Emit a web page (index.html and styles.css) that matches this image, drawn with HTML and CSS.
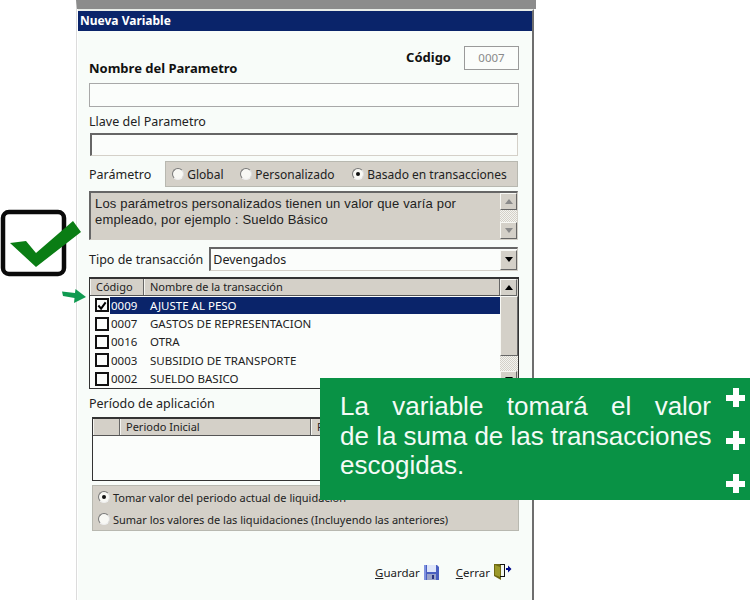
FILE: index.html
```html
<!DOCTYPE html>
<html lang="es">
<head>
<meta charset="utf-8">
<title>Nueva Variable</title>
<link rel="stylesheet" href="styles.css">
</head>
<body>
<div class="desk">
  <div class="backstrip"></div>
  <div class="window">
    <div class="titlebar">Nueva Variable</div>
    <div class="content">
      <div class="top-row">
        <label class="bold name-label">Nombre del Parametro</label>
        <div class="code-group">
          <span class="bold">Código</span>
          <span class="code-box">0007</span>
        </div>
      </div>
      <div class="field flat"></div>
      <div class="label key-label">Llave del Parametro</div>
      <div class="field inset"></div>
      <div class="param-row">
        <span class="label">Parámetro</span>
        <div class="radio-panel">
          <span class="radio-item"><i class="radio"></i>Global</span>
          <span class="radio-item"><i class="radio"></i>Personalizado</span>
          <span class="radio-item"><i class="radio on"></i>Basado en transacciones</span>
        </div>
      </div>
      <div class="desc">
        <p>Los parámetros personalizados tienen un valor que varía por empleado, por ejemplo : Sueldo Básico</p>
        <div class="scroll">
          <span class="sbtn"><svg width="8" height="5" viewBox="0 0 8 5"><path d="M4 0 8 5H0z" fill="#8a8a8a"/></svg></span>
          <span class="strack"></span>
          <span class="sbtn"><svg width="8" height="5" viewBox="0 0 8 5"><path d="M0 0H8L4 5z" fill="#8a8a8a"/></svg></span>
        </div>
      </div>
      <div class="type-row">
        <span class="label">Tipo de transacción</span>
        <div class="select">
          <span class="select-value">Devengados</span>
          <span class="sbtn big"><svg width="8" height="5" viewBox="0 0 8 5"><path d="M0 0H8L4 5z" fill="#000"/></svg></span>
        </div>
      </div>
      <div class="grid tx-grid">
        <div class="grid-main">
          <div class="grid-head">
            <span class="th th-code">Código</span>
            <span class="th th-name">Nombre de la transacción</span>
          </div>
          <div class="row selected"><i class="check on"><svg width="11" height="11" viewBox="0 0 11 11"><path d="M1.5 5.5 4.5 9 9.5 2" fill="none" stroke="#000" stroke-width="2.2"/></svg></i><span class="cell-code">0009</span><span class="cell-name">AJUSTE AL PESO</span></div>
          <div class="row"><i class="check"></i><span class="cell-code">0007</span><span class="cell-name">GASTOS DE REPRESENTACION</span></div>
          <div class="row"><i class="check"></i><span class="cell-code">0016</span><span class="cell-name">OTRA</span></div>
          <div class="row"><i class="check"></i><span class="cell-code">0003</span><span class="cell-name">SUBSIDIO DE TRANSPORTE</span></div>
          <div class="row"><i class="check"></i><span class="cell-code">0002</span><span class="cell-name">SUELDO BASICO</span></div>
        </div>
        <div class="scroll grid-scroll">
          <span class="sbtn"><svg width="8" height="5" viewBox="0 0 8 5"><path d="M4 0 8 5H0z" fill="#000"/></svg></span>
          <span class="thumb"></span>
          <span class="strack"></span>
          <span class="sbtn"><svg width="8" height="5" viewBox="0 0 8 5"><path d="M0 0H8L4 5z" fill="#000"/></svg></span>
        </div>
      </div>
      <div class="label period-label">Período de aplicación</div>
      <div class="indent">
        <div class="period-grid">
          <div class="grid-head period-head">
            <span class="th th-blank"></span>
            <span class="th th-start">Periodo Inicial</span>
            <span class="th th-end">P</span>
          </div>
        </div>
        <div class="option-panel">
          <span class="radio-item"><i class="radio on"></i>Tomar valor del periodo actual de liquidación</span>
          <span class="radio-item"><i class="radio"></i>Sumar los valores de las liquidaciones (Incluyendo las anteriores)</span>
        </div>
      </div>
      <div class="actions">
        <span class="action"><span><u>G</u>uardar</span>
          <svg width="17" height="17" viewBox="0 0 17 17"><path d="M1 1H14L16 3V16H1z" fill="#4a5fc0"/><rect x="4" y="1" width="9" height="7" fill="#dfe6fa"/><rect x="4" y="10" width="9" height="6" fill="#9aa3c8"/><rect x="9" y="11" width="2" height="4" fill="#2a3480"/><path d="M1 1V16H3V1z" fill="#7f92e0"/></svg>
        </span>
        <span class="action"><span><u>C</u>errar</span>
          <svg width="19" height="18" viewBox="0 0 19 18"><path d="M1 1H12V13H8V17L1 13z" fill="#6f6a12"/><path d="M2 2 7 4V14L2 12z" fill="#9c9a2a"/><path d="M8 2H11V13H8z" fill="#f4f8f0"/><path d="M7 1H12V14H7V13H11V2H7z" fill="#111"/><path d="M18.500 6 15 2.500V5H13V7H15V9.500z" fill="#000a8a"/></svg>
        </span>
      </div>
    </div>
  </div>

  <svg class="deco-check" width="90" height="72" viewBox="0 0 90 72">
    <rect x="3" y="4" width="61" height="62" rx="6" fill="#fff" stroke="#0a0a0a" stroke-width="4.500"/>
    <path d="M10 35 26 33 36 45 73 13 81 24 36 59z" fill="#0a7d14"/>
  </svg>
  <svg class="deco-arrow" width="26" height="16" viewBox="0 0 26 16">
    <path d="M0 2.500 13 4 13.500 0 24 8 12 14 12.500 9 1 7z" fill="#0f9a50"/>
  </svg>

  <div class="callout">
    <p class="just">La variable tomará el valor</p>
    <p class="just">de la suma de las transacciones</p>
    <p>escogidas.</p>
  </div>
  <i class="plus plus-a"></i>
  <i class="plus plus-b"></i>
  <i class="plus plus-c"></i>
</div>
</body>
</html>
```

FILE: styles.css
```css
* { box-sizing: border-box; }
html, body { margin: 0; padding: 0; background: #fff; }
.desk {
  position: relative;
  width: 750px;
  height: 600px;
  overflow: hidden;
  font-family: "Noto Sans", sans-serif;
  font-size: 11px;
  color: #222;
}
.backstrip {
  position: absolute;
  left: 76px;
  top: 0;
  width: 460px;
  height: 600px;
  background: #fff;
  border-left: 1px solid #dcdcdc;
  border-top: 9px solid #8c8c8c;
}
.window {
  position: absolute;
  left: 78px;
  top: 9px;
  width: 456px;
  height: 591px;
  background: #f8fcf9;
  border-top: 2px solid #e8ece8;
  border-right: 2px solid #6e6e6e;
}
.titlebar {
  height: 20px;
  background: #0a246a;
  color: #fff;
  font-weight: bold;
  font-size: 12px;
  line-height: 20px;
  padding-left: 2px;
}
.content {
  display: flex;
  flex-direction: column;
  padding: 15px 13px 0 11px;
}
.bold { font-weight: bold; font-size: 13px; color: #111; line-height: 18px; }
.label { font-size: 12.500px; color: #222; }
.top-row {
  display: flex;
  justify-content: space-between;
  height: 37px;
}
.name-label { align-self: flex-end; margin-bottom: 6px; }
.code-group { display: flex; align-items: flex-start; gap: 13px; }
.code-group .bold { margin-top: 2px; }
.code-box {
  width: 55px;
  height: 24px;
  border: 1px solid #9a9a9a;
  background: #fbfdfb;
  color: #8a8a8a;
  font-size: 11.500px;
  line-height: 22px;
  text-align: center;
}
.field { height: 24px; background: #fbfdfb; }
.field.flat { border: 1px solid #a8a8a8; }
.field.inset {
  height: 23px;
  margin: 0 1px 0 1px;
  border: 1px solid #d4d0c8;
  border-top: 2px solid #666;
  border-left: 2px solid #666;
}
.key-label { margin-top: 6px; height: 20px; line-height: 18px; }
.param-row {
  display: flex;
  align-items: center;
  margin-top: 5px;
  gap: 14px;
}
.radio-panel {
  width: 354px;
  height: 26px;
  margin-right: 1px;
  margin-left: auto;
  background: #d4d0c8;
  border: 1px solid #b8b8b0;
  display: grid;
  grid-template-columns: 68px 112px auto;
  align-items: center;
  padding: 0 6px 0 6px;
  font-size: 12px;
}
.radio-item { display: inline-flex; align-items: center; gap: 3px; white-space: nowrap; }
.radio {
  width: 12px;
  height: 12px;
  border-radius: 50%;
  background: #f8f8f4;
  border: 1px solid;
  border-color: #777 #ddd #eee #777;
  flex: none;
  position: relative;
}
.radio.on::after {
  content: "";
  position: absolute;
  left: 3px;
  top: 3px;
  width: 4px;
  height: 4px;
  border-radius: 50%;
  background: #111;
}
.desc {
  display: flex;
  width: 429px;
  height: 49px;
  margin-top: 4px;
  background: #d4d0c8;
  border: 1px solid #d4d0c8;
  border-top: 2px solid #666;
  border-left: 2px solid #666;
}
.desc p {
  flex: 1;
  margin: 0;
  padding: 3px 36px 0 4px;
  font-family: "Liberation Sans", sans-serif;
  font-size: 13px;
  line-height: 16px;
  letter-spacing: 0.180px;
  color: #222;
}
.scroll { display: flex; flex-direction: column; width: 17px; flex: none; }
.sbtn {
  width: 17px;
  height: 17px;
  flex: none;
  display: flex;
  align-items: center;
  justify-content: center;
  background: #d4d0c8;
  border: 1px solid;
  border-color: #f8f8f4 #666 #666 #f8f8f4;
}
.strack { flex: 1; background: repeating-conic-gradient(#f4f4f0 0 25%, #d4d0c8 0 50%) 0 0/2px 2px; }
.type-row { display: flex; align-items: center; gap: 6px; margin-top: 7px; width: 429px; }
.select {
  flex: 1;
  height: 24px;
  display: flex;
  align-items: center;
  background: #fbfdfb;
  border: 1px solid #d4d0c8;
  border-top: 2px solid #666;
  border-left: 2px solid #666;
}
.select-value { flex: 1; padding-left: 2px; font-size: 12.500px; }
.sbtn.big { height: 20px; }
.grid {
  display: flex;
  width: 430px;
  height: 112px;
  margin-top: 6px;
  border: 1px solid #333;
  border-top-width: 2px;
  background: #fbfdfb;
  overflow: hidden;
}
.grid-main { flex: 1; min-width: 0; }
.grid-head { display: flex; height: 17px; background: #d4d0c8; border-bottom: 1px solid #555; }
.th {
  display: block;
  height: 100%;
  font-size: 11px;
  line-height: 16px;
  border-right: 1px solid #666;
  border-left: 1px solid #f4f4f0;
  white-space: nowrap;
}
.th-code { width: 54px; padding-left: 5px; }
.th-name { flex: 1; padding-left: 5px; }
.row { display: flex; align-items: center; height: 18.400px; padding-left: 5px; font-size: 11.500px; white-space: nowrap; }
.check {
  width: 14px;
  height: 14px;
  flex: none;
  border: 2px solid #111;
  background: #fbfdfb;
  display: flex;
  align-items: center;
  justify-content: center;
  margin-right: 1px;
}
.cell-code { width: 39px; padding-left: 1px; flex: none; }
.cell-name { flex: 1; padding-left: 1px; }
.row.selected .cell-code, .row.selected .cell-name {
  background: #0a246a;
  color: #fff;
  height: 17px;
  line-height: 17px;
}
.grid-scroll { width: 18px; background: #d4d0c8; }
.thumb {
  height: 60px;
  flex: none;
  background: #d4d0c8;
  border: 1px solid;
  border-color: #f8f8f4 #666 #666 #f8f8f4;
}
.period-label { margin-top: 6px; height: 22px; line-height: 18px; }
.indent { padding-left: 3px; display: flex; flex-direction: column; }
.period-grid {
  height: 64px;
  border: 1px solid #333;
  border-top-width: 2px;
  background: #fbfdfb;
}
.th-blank { width: 27px; }
.th-start { width: 191px; padding-left: 5px; }
.th-end { flex: 1; padding-left: 5px; }
.option-panel {
  height: 46px;
  margin-top: 4px;
  background: #d4d0c8;
  border: 1px solid #b8b8b0;
  display: flex;
  flex-direction: column;
  justify-content: center;
  gap: 7px;
  padding-left: 5px;
  font-size: 11px;
}
.actions {
  display: flex;
  justify-content: flex-end;
  align-items: center;
  gap: 16px;
  margin-top: 32px;
  padding-right: 7px;
  font-size: 11.500px;
}
.action { display: inline-flex; align-items: center; gap: 3px; }
.deco-check { position: absolute; left: 0; top: 208px; }
.deco-arrow { position: absolute; left: 62px; top: 289px; }
.callout {
  position: absolute;
  left: 320px;
  top: 378px;
  width: 430px;
  height: 122px;
  background: #099245;
  color: #f4fbf6;
  font-family: "Liberation Sans", sans-serif;
  font-size: 26px;
  line-height: 29.500px;
  padding: 14px 39px 0 20px;
}
.callout p { margin: 0; white-space: nowrap; }
.callout .just { text-align: justify; text-align-last: justify; }
.plus {
  position: absolute;
  left: 726px;
  width: 19px;
  height: 19px;
  background:
    linear-gradient(#fff, #fff) center / 19px 6px no-repeat,
    linear-gradient(#fff, #fff) center / 6px 19px no-repeat;
}
.plus-a { top: 388px; }
.plus-b { top: 431px; }
.plus-c { top: 474px; }
```
